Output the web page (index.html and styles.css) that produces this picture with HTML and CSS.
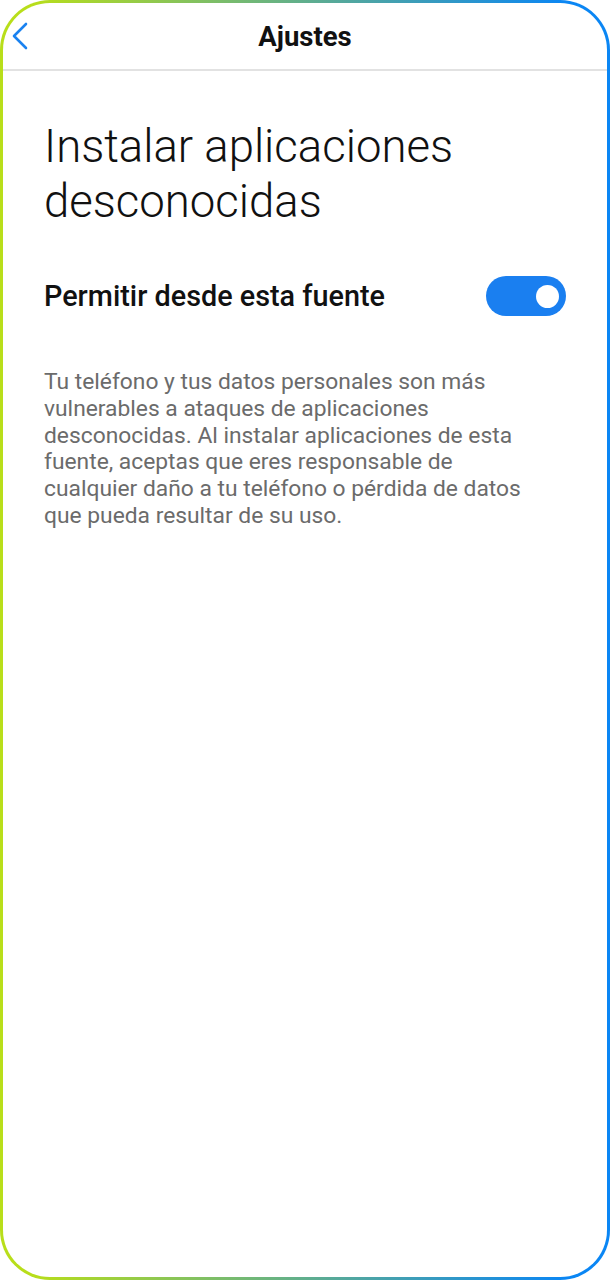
FILE: index.html
```html
<!DOCTYPE html>
<html lang="es">
<head>
<meta charset="utf-8">
<link rel="stylesheet" href="styles.css">
</head>
<body>
<div class="frame">
  <header class="topbar">
    <svg class="back" width="20" height="30" viewBox="0 0 20 30" aria-hidden="true">
      <path d="M16 3 L4 15 L16 27" fill="none" stroke="#1a82f0" stroke-width="2.6" stroke-linecap="round" stroke-linejoin="round"/>
    </svg>
    <h1 class="topbar-title">Ajustes</h1>
  </header>
  <main class="content">
    <h2 class="page-title">Instalar aplicaciones desconocidas</h2>
    <div class="setting-row">
      <span class="setting-label">Permitir desde esta fuente</span>
      <span class="toggle on"><span class="knob"></span></span>
    </div>
    <p class="note">Tu teléfono y tus datos personales son más vulnerables a ataques de aplicaciones desconocidas. Al instalar aplicaciones de esta fuente, aceptas que eres responsable de cualquier daño a tu teléfono o pérdida de datos que pueda resultar de su uso.</p>
  </main>
</div>
</body>
</html>
```
FILE: styles.css
```css
* { box-sizing: border-box; }
html, body { margin: 0; padding: 0; background: #fff; }
body { font-family: Roboto, "Noto Sans", sans-serif; }
.frame {
  width: 610px;
  height: 1280px;
  border: 3px solid transparent;
  border-radius: 50px;
  background:
    linear-gradient(#fff, #fff) padding-box,
    linear-gradient(90deg, #b8de1a 5%, #56a99a 55%, #0a86f4 93%) border-box;
  overflow: hidden;
}
.topbar {
  position: relative;
  height: 68px;
  border-bottom: 2px solid #e2e2e2;
  display: flex;
  align-items: center;
  justify-content: center;
}
.back {
  position: absolute;
  left: 7px;
  top: 18px;
}
.topbar-title {
  margin: 0;
  font-size: 27.5px;
  font-weight: 700;
  color: #111;
}
.content {
  padding: 0 41px;
}
.page-title {
  margin: 48px 0 0;
  font-size: 45.5px;
  font-weight: 300;
  line-height: 55px;
  color: #111;
}
.setting-row {
  display: flex;
  align-items: center;
  justify-content: space-between;
  margin-top: 47px;
}
.setting-label {
  font-size: 28.8px;
  font-weight: 500;
  color: #111;
}
.toggle {
  width: 80px;
  height: 40px;
  border-radius: 20px;
  background: #1a7ff0;
  display: flex;
  align-items: center;
  justify-content: flex-end;
  padding-right: 7px;
}
.knob {
  width: 23px;
  height: 23px;
  border-radius: 50%;
  background: #fff;
}
.note {
  margin: 53px 0 0;
  font-size: 22.8px;
  line-height: 26.8px;
  color: #6b6b6b;
  max-width: 500px;
}
```
